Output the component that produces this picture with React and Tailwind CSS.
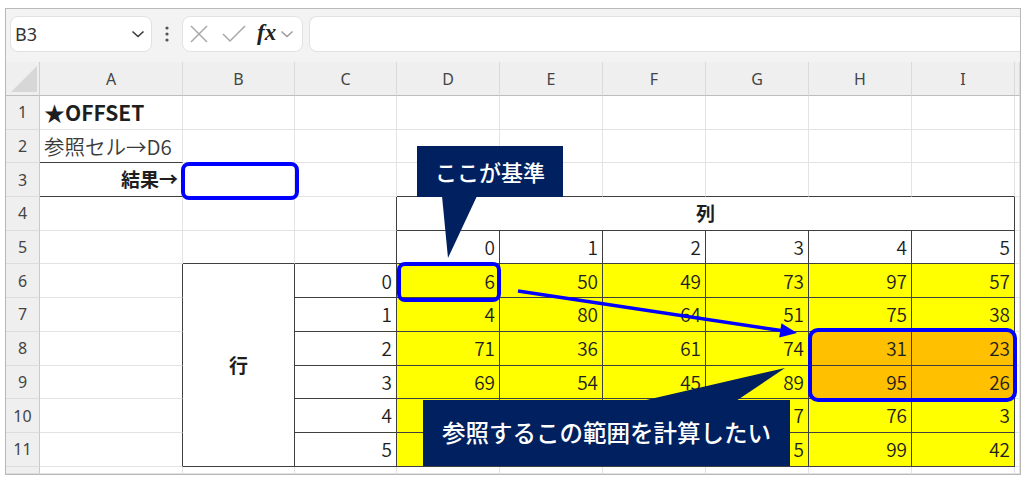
import React from "react";

const data = [
  [6, 50, 49, 73, 97, 57],
  [4, 80, 64, 51, 75, 38],
  [71, 36, 61, 74, 31, 23],
  [69, 54, 45, 89, 95, 26],
  ["", "", "", 7, 76, 3],
  ["", "", "", 5, 99, 42],
];
const letters = ["A", "B", "C", "D", "E", "F", "G", "H", "I", ""];

const R_LIGHT = "border-r-[#e3e3e3]";
const R_DARK = "border-r-[#3f3f3f]";
const B_LIGHT = "border-b-[#e3e3e3]";
const B_DARK = "border-b-[#3f3f3f]";

function spec(r, c) {
  const s = {
    text: null,
    darkR: false,
    darkB: false,
    bg: "",
    align: "justify-end",
    weight: "font-[350]",
    size: "text-[19px]",
    extra: "",
    color: "text-[#1e1e1e]",
  };
  if (r === 1 && c === 0) {
    s.text = "★OFFSET";
    s.weight = "font-bold";
    s.size = "text-[21px]";
    s.align = "justify-start";
  }
  if (r === 2 && c === 0) {
    s.text = "参照セル→D6";
    s.align = "justify-start";
    s.size = "text-[20.5px]";
    s.darkB = true;
    s.color = "text-[#3a3a3a]";
  }
  if (r === 3 && c === 0) {
    s.text = "結果→";
    s.weight = "font-bold";
    s.darkB = true;
  }
  if (r === 3 && c >= 3 && c <= 8) s.darkB = true;
  if ((r === 4 || r === 5) && c === 2) s.darkR = true;
  if (r === 4 && c === 3) {
    s.text = "列";
    s.weight = "font-bold";
    s.align = "justify-center";
    s.darkR = true;
    s.darkB = true;
    s.extra = "col-span-6";
  }
  if (r === 4 && c > 3 && c <= 8) return null;
  if (r === 5 && c >= 3 && c <= 8) {
    s.text = String(c - 3);
    s.darkR = true;
    s.darkB = true;
  }
  if (r === 5 && (c === 1 || c === 2)) s.darkB = true;
  if (r >= 6 && c === 0) s.darkR = true;
  if (r === 6 && c === 1) {
    s.text = "行";
    s.weight = "font-bold";
    s.align = "justify-center";
    s.darkR = true;
    s.darkB = true;
    s.extra = "row-span-6";
  }
  if (r > 6 && c === 1) return null;
  if (r >= 6 && c === 2) {
    s.text = String(r - 6);
    s.darkR = true;
    s.darkB = true;
  }
  if (r >= 6 && c >= 3 && c <= 8) {
    s.text = String(data[r - 6][c - 3]);
    s.darkR = true;
    s.darkB = true;
    const orange = (r === 8 || r === 9) && (c === 7 || c === 8);
    s.bg = orange ? "bg-[#ffc000]" : "bg-[#ffff00]";
  }
  return s;
}

function Cell({ s }) {
  return (
    <div
      className={`flex items-center px-[4px] border-r border-b overflow-hidden whitespace-nowrap ${s.size} ${
        s.darkR ? R_DARK : R_LIGHT
      } ${s.darkB ? B_DARK : B_LIGHT} ${s.bg} ${s.align} ${s.weight} ${s.extra} ${s.color}`}
    >
      {s.text}
    </div>
  );
}

function Toolbar() {
  return (
    <div className="h-[53px] shrink-0 bg-[#f3f3f3] flex items-start pt-[7px] pl-[4px]">
      <div className="w-[142px] h-[36px] bg-white rounded-[8px] border border-[#e2e2e2] flex items-center justify-between pl-[4px] pr-[6px]">
        <span className="text-[18px] text-[#333]" style={{ fontFamily: '"Noto Sans", sans-serif' }}>
          B3
        </span>
        <svg width="14" height="10" viewBox="0 0 14 10">
          <path d="M1.5 2.5 L7 7.5 L12.5 2.5" fill="none" stroke="#3a3a3a" strokeWidth="1.6" />
        </svg>
      </div>
      <div className="w-[30px] h-[36px] flex items-center justify-center">
        <svg width="4" height="18" viewBox="0 0 4 18">
          <circle cx="2" cy="3" r="1.6" fill="#555" />
          <circle cx="2" cy="9" r="1.6" fill="#555" />
          <circle cx="2" cy="15" r="1.6" fill="#555" />
        </svg>
      </div>
      <div className="w-[121px] h-[36px] bg-white rounded-[8px] border border-[#e2e2e2] flex items-center pl-[5px]">
        <svg width="22" height="22" viewBox="0 0 22 22">
          <path d="M3 3 L19 19 M19 3 L3 19" stroke="#a8a8a8" strokeWidth="1.5" fill="none" />
        </svg>
        <svg width="26" height="22" viewBox="0 0 26 22" className="ml-[11px]">
          <path d="M2 11 L9 18 L24 3" stroke="#a8a8a8" strokeWidth="1.5" fill="none" />
        </svg>
        <span
          className="ml-[10px] italic font-bold text-[23px] text-[#222] leading-none pb-[3px]"
          style={{ fontFamily: '"Liberation Serif", serif' }}
        >
          fx
        </span>
        <svg width="14" height="10" viewBox="0 0 14 10" className="ml-[4px]">
          <path d="M1.5 2.5 L7 7.5 L12.5 2.5" fill="none" stroke="#9a9a9a" strokeWidth="1.4" />
        </svg>
      </div>
      <div className="ml-[6px] flex-1 h-[36px] bg-white rounded-l-[8px] border border-r-0 border-[#e2e2e2]" />
    </div>
  );
}

function Grid() {
  const cells = [];
  cells.push(
    <div
      key="corner"
      className="bg-[#efefef] border-r border-b border-r-[#d0d0d0] border-b-[#bdbdbd] flex items-end justify-end pr-[2px] pb-[3px]"
    >
      <svg width="26" height="26" viewBox="0 0 26 26">
        <polygon points="0,26 26,26 26,0" fill="#d7d7d7" />
      </svg>
    </div>
  );
  letters.forEach((l, i) => {
    cells.push(
      <div
        key={"h" + i}
        className="bg-[#efefef] border-r border-b border-r-[#dadada] border-b-[#bdbdbd] flex items-center justify-center text-[16px] text-[#444]"
        style={{ fontFamily: '"Noto Sans", sans-serif' }}
      >
        {l}
      </div>
    );
  });
  for (let r = 1; r <= 12; r++) {
    cells.push(
      <div
        key={"rh" + r}
        className="bg-[#efefef] border-r border-b border-r-[#c9c9c9] border-b-[#dcdcdc] flex items-center justify-center text-[16px] text-[#444]"
        style={{ fontFamily: '"Noto Sans", sans-serif' }}
      >
        {r <= 11 ? r : ""}
      </div>
    );
    for (let c = 0; c <= 9; c++) {
      if (r === 12 || c === 9) {
        cells.push(<div key={r + "-" + c} className="border-r border-b border-r-[#e3e3e3] border-b-[#e3e3e3]" />);
        continue;
      }
      const s = spec(r, c);
      if (!s) continue;
      cells.push(<Cell key={r + "-" + c} s={s} />);
    }
  }
  return (
    <div
      className="flex-1 grid grid-cols-[34px_143px_112px_102px_103px_103px_103px_103px_103px_103px_1fr] grid-rows-[34px_repeat(11,33.7px)_1fr] bg-white"
      style={{ fontFamily: '"Noto Sans CJK JP", "Noto Sans", sans-serif' }}
    >
      {cells}
    </div>
  );
}

export default function App() {
  return (
    <div className="relative w-[1024px] h-[480px] bg-white overflow-hidden">
      <div className="ml-[5px] mt-[8px] w-[1016px] h-[467px] border border-[#b8b8b8] flex flex-col overflow-hidden">
        <Toolbar />
        <Grid />
      </div>

      <div className="absolute left-[181px] top-[162px] w-[118px] h-[38px] border-4 border-[#0000ff] rounded-[8px]" />
      <div className="absolute left-[397px] top-[262px] w-[104px] h-[40px] border-4 border-[#0000ff] rounded-[8px]" />
      <div className="absolute left-[808px] top-[328px] w-[209px] h-[74px] border-4 border-[#0000ff] rounded-[10px]" />

      <svg className="absolute left-0 top-0" width="1024" height="480" viewBox="0 0 1024 480">
        <line x1="518" y1="291" x2="781" y2="330.5" stroke="#0000ff" strokeWidth="3.5" />
        <polygon points="797,333 779.2,337.6 781.4,323.3" fill="#0000ff" />
        <polygon points="442,196 477,196 448,258" fill="#002060" />
        <polygon points="642,401 736,401 785,368" fill="#002060" />
      </svg>

      <div
        className="absolute left-[417px] top-[146px] w-[146px] h-[51px] bg-[#002060] text-white text-[22px] font-medium flex items-center justify-center"
        style={{ fontFamily: '"Noto Sans CJK JP", sans-serif' }}
      >
        ここが基準
      </div>
      <div
        className="absolute left-[423px] top-[400px] w-[367px] h-[66px] bg-[#002060] text-white text-[23.5px] font-medium flex items-center justify-center"
        style={{ fontFamily: '"Noto Sans CJK JP", sans-serif' }}
      >
        参照するこの範囲を計算したい
      </div>
    </div>
  );
}
